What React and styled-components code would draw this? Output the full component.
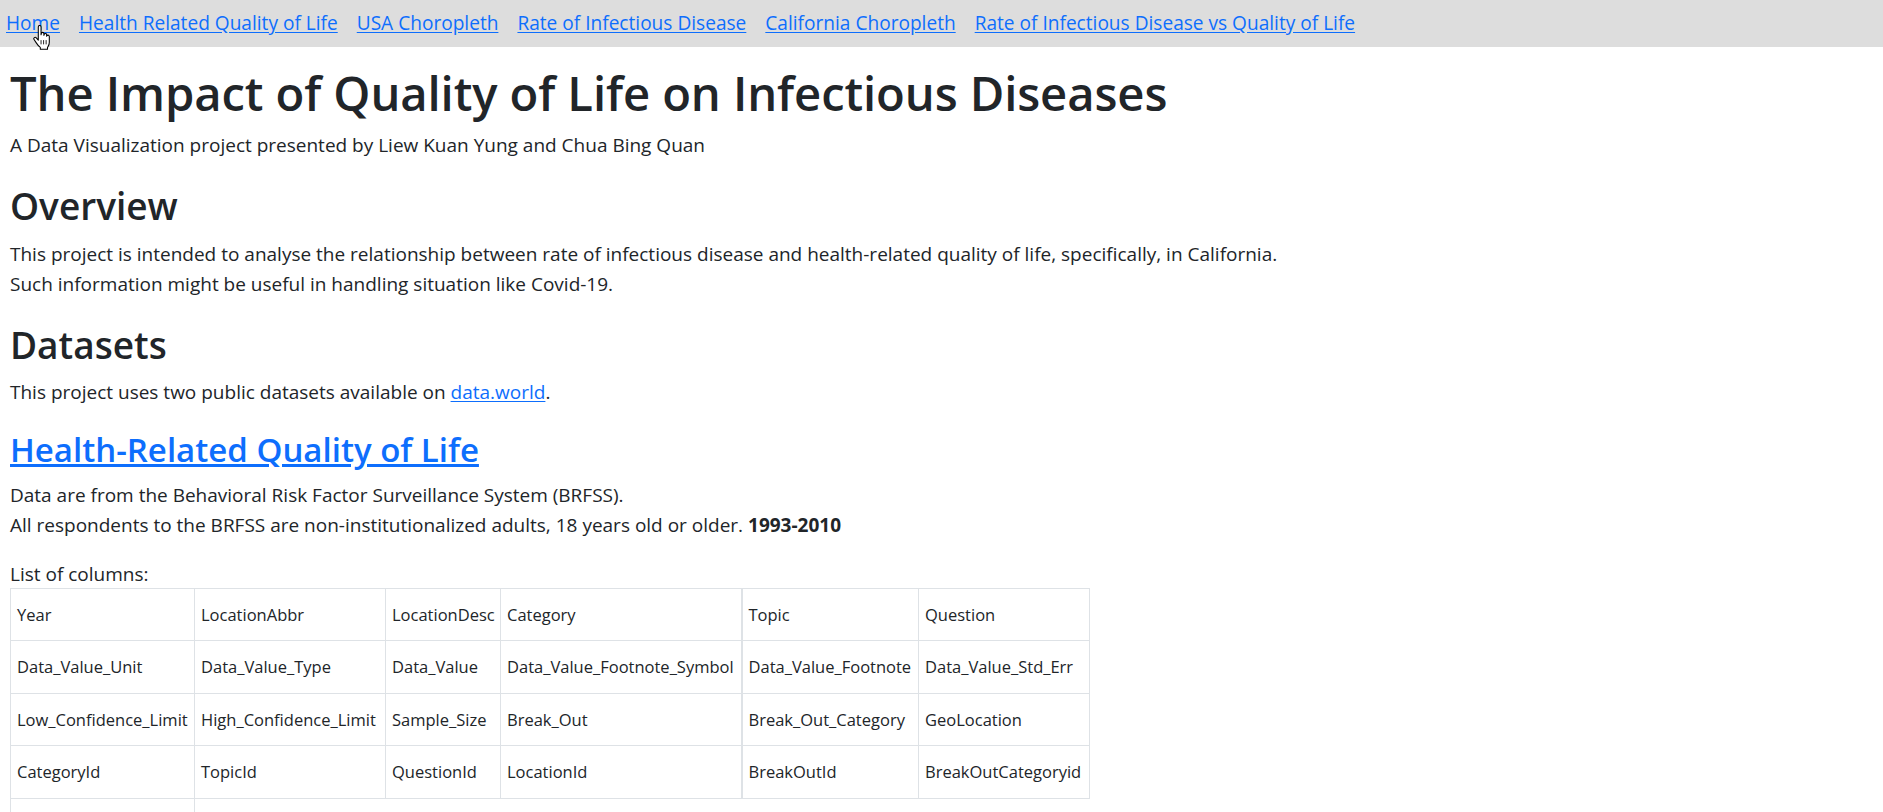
import React from "react";
import styled, { createGlobalStyle } from "styled-components";

const GlobalStyle = createGlobalStyle`
  html, body { margin: 0; padding: 0; background: #fff; }
  body {
    font-family: "Open Sans", "Noto Sans", sans-serif;
    font-size: 19px;
    line-height: 30px;
    color: #212529;
  }
  * { box-sizing: border-box; }
`;

const NavBar = styled.nav`
  position: relative;
  display: flex;
  align-items: center;
  gap: 19px;
  height: 47px;
  padding: 0 0 2px 6px;
  background: #dddddd;
  font-size: 19.1px;
`;

const Link = styled.a`
  color: #0d6efd;
  text-decoration: underline;
  text-underline-offset: 2px;
  cursor: pointer;
`;

const Cursor = styled.svg`
  position: absolute;
  left: 33px;
  top: 25px;
  width: 18px;
  height: 26px;
`;

const Main = styled.main`
  padding: 18px 10px 0;
`;

const Title = styled.h1`
  margin: 0 0 7.7px;
  font-size: 47.2px;
  font-weight: 600;
  line-height: 57.6px;
  letter-spacing: -0.1px;
`;

const Para = styled.p`
  margin: 0 0 ${(p) => (p.$tight ? "0" : "20px")};
  line-height: ${(p) => (p.$tight ? "28px" : "30px")};
`;

const Section = styled.h2`
  margin: 23px 0 9.4px;
  font-size: ${(p) => (p.$small ? "33px" : "37px")};
  font-weight: 600;
  line-height: ${(p) => (p.$small ? "40.3px" : "46px")};
`;

const Table = styled.table`
  border-collapse: collapse;
  table-layout: fixed;
  width: 1079px;
  font-size: 16.5px;
`;

const Cell = styled.td`
  border: 1px solid #dee2e6;
  border-left-width: ${(p) => (p.$thick ? "2px" : "1px")};
  border-right-width: ${(p) => (p.$open ? "0" : "1px")};
  padding: 12.75px 6px;
  height: 52.5px;
  line-height: 26px;
  white-space: nowrap;
  overflow: hidden;
  vertical-align: middle;
`;

const colWidths = [184, 191, 115, 241, 177, 171];

const rows = [
  ["Year", "LocationAbbr", "LocationDesc", "Category", "Topic", "Question"],
  ["Data_Value_Unit", "Data_Value_Type", "Data_Value", "Data_Value_Footnote_Symbol", "Data_Value_Footnote", "Data_Value_Std_Err"],
  ["Low_Confidence_Limit", "High_Confidence_Limit", "Sample_Size", "Break_Out", "Break_Out_Category", "GeoLocation"],
  ["CategoryId", "TopicId", "QuestionId", "LocationId", "BreakOutId", "BreakOutCategoryid"],
];

const navItems = [
  "Home",
  "Health Related Quality of Life",
  "USA Choropleth",
  "Rate of Infectious Disease",
  "California Choropleth",
  "Rate of Infectious Disease vs Quality of Life",
];

export default function App() {
  return (
    <>
      <GlobalStyle />
      <NavBar>
        {navItems.map((n) => (
          <Link key={n}>{n}</Link>
        ))}
        <Cursor viewBox="0 0 17 24">
          <path
            d="M5 1.5c0-.8.6-1.3 1.3-1.3s1.3.5 1.3 1.3V9l.2-1.2c.1-.7.7-1.1 1.3-1.1.7 0 1.2.5 1.2 1.2V9.5l.2-.8c.2-.6.7-.9 1.3-.9.7 0 1.2.6 1.1 1.3v1.2l.3-.4c.3-.5.8-.7 1.3-.6.6.2.9.7.9 1.3v5.4c0 1.6-.4 2.8-1.1 3.9l-.6 1v1.8H6.9v-1.8C5.6 20 4.2 18.3 3.1 16.6L1 13.4c-.4-.6-.3-1.4.3-1.8.6-.4 1.3-.3 1.8.2L5 14V1.5z"
            fill="#fff"
            stroke="#000"
            strokeWidth="1"
            strokeLinejoin="round"
          />
          <path d="M7.6 14v4M10 14v4M12.4 14v4" stroke="#000" strokeWidth="0.8" />
        </Cursor>
      </NavBar>
      <Main>
        <Title>The Impact of Quality of Life on Infectious Diseases</Title>
        <Para>A Data Visualization project presented by Liew Kuan Yung and Chua Bing Quan</Para>
        <Section>Overview</Section>
        <Para>
          This project is intended to analyse the relationship between rate of infectious disease and
          health-related quality of life, specifically, in California.
          <br />
          Such information might be useful in handling situation like Covid-19.
        </Para>
        <Section>Datasets</Section>
        <Para>
          This project uses two public datasets available on <Link>data.world</Link>.
        </Para>
        <Section $small>
          <Link>Health-Related Quality of Life</Link>
        </Section>
        <Para>
          Data are from the Behavioral Risk Factor Surveillance System (BRFSS).
          <br />
          All respondents to the BRFSS are non-institutionalized adults, 18 years old or older.{" "}
          <strong>1993-2010</strong>
        </Para>
        <Para $tight>List of columns:</Para>
        <Table>
          <colgroup>
            {colWidths.map((w, i) => (
              <col key={i} style={{ width: w }} />
            ))}
          </colgroup>
          <tbody>
            {rows.map((r, i) => (
              <tr key={i}>
                {r.map((c, j) => (
                  <Cell key={c} $thick={j === 4}>
                    {c}
                  </Cell>
                ))}
              </tr>
            ))}
            <tr>
              <Cell />
              <Cell colSpan={5} $open />
            </tr>
          </tbody>
        </Table>
      </Main>
    </>
  );
}
